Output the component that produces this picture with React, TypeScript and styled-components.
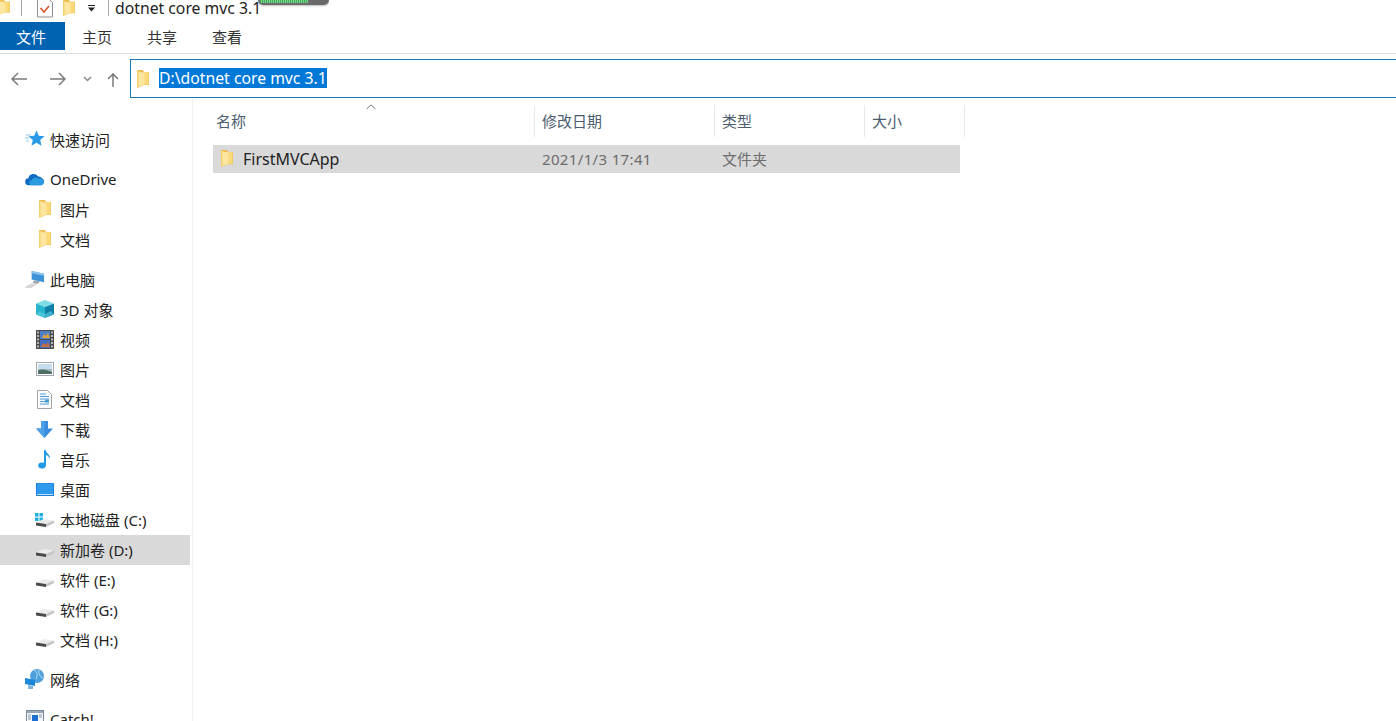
import React from 'react'
import styled, { createGlobalStyle } from 'styled-components'

const GlobalStyle = createGlobalStyle`
  html, body {
    margin: 0;
    padding: 0;
    background: #fff;
    overflow: hidden;
  }
  body {
    font-family: "Noto Sans", "Noto Sans CJK SC", sans-serif;
    color: #222;
  }
`

const Window = styled.div`
  display: flex;
  flex-direction: column;
  width: 1396px;
  height: 721px;
  overflow: hidden;
  position: relative;
`

const TitleBar = styled.div`
  display: flex;
  align-items: flex-start;
  height: 22px;
  flex: none;
`

const TitleSep = styled.span<{ $left: number }>`
  width: 1px;
  height: 16px;
  background: #a8a8a8;
  flex: none;
  margin-left: ${p => p.$left}px;
`

const TitleSlot = styled.span<{ $left: number }>`
  display: block;
  flex: none;
  line-height: 0;
  margin-left: ${p => p.$left}px;
`

const TitleText = styled.span`
  font-size: 15.75px;
  line-height: 17px;
  margin-left: 6px;
  color: #222;
  white-space: nowrap;
`

const Meter = styled.div`
  position: absolute;
  left: 258px;
  top: 0;
  width: 71px;
  height: 5px;
  background: #6a6a6a;
  border-radius: 0 0 5px 5px;
  box-shadow: 0 1px 2px rgba(0, 0, 0, 0.25);
`

const MeterFill = styled.div`
  width: 48px;
  height: 3px;
  margin-left: 2px;
  background: repeating-linear-gradient(90deg, #3fae5c 0 1px, #7ecf8e 1px 2px);
`

const Ribbon = styled.div`
  display: flex;
  height: 32px;
  flex: none;
  box-sizing: border-box;
  border-bottom: 1px solid #d9dde2;
`

const RibbonTab = styled.div<{ $active?: boolean }>`
  display: flex;
  align-items: center;
  justify-content: center;
  box-sizing: border-box;
  width: 65px;
  height: 28px;
  padding-right: ${p => (p.$active ? '3px' : '1px')};
  font-size: 15px;
  color: ${p => (p.$active ? '#fff' : '#333')};
  background: ${p => (p.$active ? '#0063b1' : 'transparent')};
`

const AddressRow = styled.div`
  display: flex;
  height: 44px;
  flex: none;
  padding-top: 5px;
  box-sizing: border-box;
`

const NavIcons = styled.div`
  display: flex;
  align-items: center;
  width: 130px;
  flex: none;
  padding-left: 11px;
  box-sizing: border-box;
`

const NavIcon = styled.svg<{ $left?: number; $top?: number }>`
  flex: none;
  margin-left: ${p => p.$left ?? 0}px;
  margin-top: ${p => p.$top ?? 1}px;
`

const AddressBox = styled.div`
  display: flex;
  align-items: center;
  flex: 1;
  height: 39px;
  box-sizing: border-box;
  border: 1px solid #1979b5;
  border-right: none;
  padding-left: 6px;
`

const AddressText = styled.span`
  display: block;
  margin: 0 0 2px 10px;
  font-size: 15.75px;
  line-height: 20px;
  background: #0078d7;
  color: #fff;
  white-space: nowrap;
`

const Body = styled.div`
  display: flex;
  flex: 1;
  min-height: 0;
`

const Sidebar = styled.nav`
  width: 193px;
  flex: none;
  box-sizing: border-box;
  padding-top: 27px;
  border-right: 1px solid #f0f0f0;
  display: flex;
  flex-direction: column;
`

const NavRow = styled.div<{ $level: number; $selected?: boolean; $gap?: boolean }>`
  display: flex;
  align-items: center;
  flex: none;
  height: 30px;
  width: 190px;
  margin-top: ${p => (p.$gap ? '10px' : 0)};
  padding: 0 0 2px ${p => (p.$level === 1 ? '25px' : '35px')};
  box-sizing: border-box;
  background: ${p => (p.$selected ? '#d9d9d9' : 'transparent')};
  font-size: 15px;
  color: #222;
  white-space: nowrap;
`

const NavIconSlot = styled.span<{ $level: number }>`
  display: flex;
  align-items: center;
  justify-content: center;
  width: ${p => (p.$level === 1 ? '20px' : '19px')};
  height: 20px;
  margin-right: ${p => (p.$level === 1 ? '5px' : '6px')};
  flex: none;
`

const Content = styled.main`
  flex: 1;
  padding: 7px 0 0 20px;
`

const ColumnHeader = styled.div`
  display: flex;
  height: 32px;
  position: relative;
`

const HeaderCell = styled.div<{ $width: number; $first?: boolean }>`
  display: flex;
  align-items: center;
  box-sizing: border-box;
  width: ${p => p.$width}px;
  height: 32px;
  padding: 0 0 2px ${p => (p.$first ? '3px' : '7px')};
  border-right: 1px solid #e6e8ea;
  font-size: 15px;
  color: #4c5d70;
`

const SortArrow = styled.svg`
  position: absolute;
  left: 153px;
  top: -1px;
`

const FileRow = styled.div`
  display: flex;
  align-items: center;
  width: 747px;
  height: 28px;
  margin-top: 8px;
  box-sizing: border-box;
  padding-bottom: 1px;
  background: #d9d9d9;
  font-size: 16px;
`

const FileName = styled.div`
  display: flex;
  align-items: center;
  width: 321px;
  box-sizing: border-box;
  padding-left: 8px;
  color: #222;
`

const FileLabel = styled.span`
  margin-left: 10px;
`

const FileCell = styled.div<{ $width: number; $numeric?: boolean }>`
  width: ${p => p.$width}px;
  box-sizing: border-box;
  padding-left: 8px;
  color: #6d6d6d;
  font-size: 15px;
  letter-spacing: ${p => (p.$numeric ? '0.35px' : 0)};
`

const Folder = ({ width = 12, height = 18 }: { width?: number; height?: number }) => (
  <svg width={width} height={height} viewBox="0 0 12 18" preserveAspectRatio="none">
    <path d="M0 0h6l1 2h5v13H7l-7 3z" fill="#eebd50" />
    <path d="M6 2h5.500v12.500H6z" fill="#fbd978" />
    <path d="M0 1l7.500 2v11.500L0 17.500z" fill="#fde6a0" />
    <path d="M0 1l1.500.4v15.500L0 17.500z" fill="#f6cf6e" />
  </svg>
)

const Star = () => (
  <svg width="20" height="18" viewBox="0 0 20 18">
    <path d="M11.500 0.500l2.300 5.300 5.700.5-4.300 3.800 1.300 5.600-5-3-5 3 1.300-5.600-4.300-3.800 5.700-.5z" fill="#2a9ae8" />
    <path d="M1 5h5M0 8h4M1 11h3" stroke="#8cc8f0" strokeWidth="1" />
  </svg>
)

const Cloud = () => (
  <svg width="21" height="14" viewBox="0 0 21 14">
    <path d="M4 13.500a3.600 3.600 0 0 1-.4-7.200 5.600 5.600 0 0 1 10.300-1.800 4.600 4.600 0 0 1 3.600 1.400 4 4 0 0 1-.5 7.600z" fill="#0f6cc0" />
    <path d="M7 13.500a2.600 2.600 0 0 1 0-5.200c1-2.600 5-4 7.500-1.600a3.600 3.600 0 0 1 3 .3c3 1 3.600 6.500-1 6.500z" fill="#2b9ae0" />
  </svg>
)

const Computer = () => (
  <svg width="21" height="19" viewBox="0 0 21 19">
    <path d="M0 17l7-3.500h7L7 18.500H1z" fill="#d8d8d8" />
    <path d="M7 0.500l13 3v9l-13-3z" fill="#3f94d8" />
    <path d="M7 0.500l13 3v2L7 3z" fill="#8cc4ef" />
    <path d="M10 10l6 1.800-3 2.200-5-1z" fill="#9aa5ae" />
  </svg>
)

const Cube = () => (
  <svg width="18" height="18" viewBox="0 0 18 18">
    <path d="M9 0l9 3.500-9 3.500-9-3.500z" fill="#7fdde8" />
    <path d="M0 3.500l9 3.500v11l-9-3.500z" fill="#25b4cc" />
    <path d="M18 3.500L9 7v11l9-3.500z" fill="#107fa8" />
    <path d="M3 11l6 3 6-3 3 3.500-9 3.500-9-3.500z" fill="#5fcfe0" opacity="0.6" />
  </svg>
)

const Film = () => (
  <svg width="18" height="19" viewBox="0 0 18 19">
    <rect width="18" height="19" fill="#4a4a4a" />
    <path d="M1 1.500h2v2H1zM1 5h2v2H1zM1 8.500h2v2H1zM1 12h2v2H1zM1 15.500h2v2H1zM15 1.500h2v2h-2zM15 5h2v2h-2zM15 8.500h2v2h-2zM15 12h2v2h-2zM15 15.500h2v2h-2z" fill="#b8b8b8" />
    <rect x="4" y="1" width="10" height="8" fill="#4d80c9" />
    <rect x="4" y="10" width="10" height="8" fill="#3f6fc4" />
    <path d="M6 8l2-4 2 2 2-3 2 5z" fill="#e0a43a" />
    <path d="M5 17l2-4 3 2 2-3 2 5z" fill="#c86a3a" />
  </svg>
)

const Picture = () => (
  <svg width="18" height="14" viewBox="0 0 18 14">
    <rect x="0.500" y="0.500" width="17" height="13" fill="#fff" stroke="#a4a8ac" />
    <rect x="2" y="2" width="14" height="5" fill="#c4dcee" />
    <rect x="2" y="7" width="14" height="5" fill="#a8bcc0" />
    <path d="M2 8.500c4-2 8-1 14 1.500v2H2z" fill="#4f6f65" />
  </svg>
)

const DocIcon = () => (
  <svg width="15" height="19" viewBox="0 0 15 19">
    <path d="M0.500 0.500h10l4 4v14H0.500z" fill="#fbfbfb" stroke="#a0a6ac" />
    <path d="M3 4h6M3 6.500h9M3 9h9M3 11.500h9M3 14h9" stroke="#4a9ad6" strokeWidth="1" />
    <path d="M8 9.500h4v3H8z" fill="#4a9ad6" />
  </svg>
)

const Download = () => (
  <svg width="17" height="17" viewBox="0 0 17 17">
    <path d="M5 0h7v7.500h5L8.500 17 0 7.500h5z" fill="#3a8ddc" />
    <path d="M5 0h3.500v17L0 7.500h5z" fill="#4da0e6" />
  </svg>
)

const Note = () => (
  <svg width="13" height="19" viewBox="0 0 13 19">
    <ellipse cx="4" cy="15.500" rx="3.800" ry="3" fill="#1f9ae6" />
    <path d="M6 15V0h1.500c.5 3 5 4.500 4.500 9-1-2.500-2.500-3.500-4-4v10.500z" fill="#1f9ae6" />
  </svg>
)

const Desktop = () => (
  <svg width="18" height="13" viewBox="0 0 18 13">
    <rect width="18" height="13" fill="#1c7ed6" />
    <rect x="1" y="0.500" width="16" height="10.500" fill="#2f9bef" />
    <path d="M1 11h16v1H1z" fill="#bfe2fa" />
  </svg>
)

const Drive = ({ windows }: { windows?: boolean }) => (
  <svg width="19" height="19" viewBox="0 0 19 19">
    {windows && (
      <g fill="#1fb0e0">
        <rect x="0" y="3" width="3.500" height="3.500" />
        <rect x="4.500" y="3" width="3.500" height="3.500" />
        <rect x="0" y="7.500" width="3.500" height="3.500" />
        <rect x="4.500" y="7.500" width="3.500" height="3.500" />
      </g>
    )}
    <path d="M1 12.500l8-3.500 10 1.500-7 3.500z" fill="#ececec" />
    <path d="M1 12.500l10 1.500v3L1 15.500z" fill="#4a4a4a" />
    <path d="M11 14l8-3.500v2.500L11 17z" fill="#c4c4c4" />
  </svg>
)

const Network = () => (
  <svg width="20" height="20" viewBox="0 0 20 20">
    <circle cx="12" cy="7" r="7" fill="#4da0dc" />
    <path d="M9 1c3 1 4 5 2 9M14 1c-1 3 1 7 4 8" stroke="#bfe0f4" fill="none" />
    <path d="M0 9l10 2v6l-10-2z" fill="#1c86d8" />
    <path d="M3 16l5 1v3H3z" fill="#7fb4dc" />
  </svg>
)

const Catch = () => (
  <svg width="18" height="18" viewBox="0 0 18 18">
    <rect x="0.500" y="0.500" width="17" height="17" fill="#f4f6f8" stroke="#7a8a9a" />
    <rect x="1" y="1" width="16" height="2" fill="#98a8b8" />
    <rect x="6" y="5" width="6" height="6" fill="#1c6fd0" />
    <path d="M2 5h3M2 7h3M2 9h3M13 5h3M13 7h3" stroke="#8a98a8" />
  </svg>
)

const TaskDoc = () => (
  <svg width="16" height="18" viewBox="0 0 16 18">
    <path d="M0.500 -2h10.500l4.500 4.500v14.500H0.500z" fill="#fcfcfc" stroke="#8f8f8f" />
    <path d="M3.500 8l3.500 4 5-6" stroke="#d9572b" strokeWidth="1.600" fill="none" />
  </svg>
)

const navRows = [
  { label: '快速访问', level: 1, icon: <Star />, gap: false },
  { label: 'OneDrive', level: 1, icon: <Cloud />, gap: true },
  { label: '图片', level: 2, icon: <Folder /> },
  { label: '文档', level: 2, icon: <Folder /> },
  { label: '此电脑', level: 1, icon: <Computer />, gap: true },
  { label: '3D 对象', level: 2, icon: <Cube /> },
  { label: '视频', level: 2, icon: <Film /> },
  { label: '图片', level: 2, icon: <Picture /> },
  { label: '文档', level: 2, icon: <DocIcon /> },
  { label: '下载', level: 2, icon: <Download /> },
  { label: '音乐', level: 2, icon: <Note /> },
  { label: '桌面', level: 2, icon: <Desktop /> },
  { label: '本地磁盘 (C:)', level: 2, icon: <Drive windows /> },
  { label: '新加卷 (D:)', level: 2, icon: <Drive />, selected: true },
  { label: '软件 (E:)', level: 2, icon: <Drive /> },
  { label: '软件 (G:)', level: 2, icon: <Drive /> },
  { label: '文档 (H:)', level: 2, icon: <Drive /> },
  { label: '网络', level: 1, icon: <Network />, gap: true },
  { label: 'Catch!', level: 1, icon: <Catch />, gap: true }
]

export default function App() {
  return (
    <Window>
      <GlobalStyle />
      <TitleBar>
        <TitleSlot $left={-2}>
          <Folder width={12} height={15} />
        </TitleSlot>
        <TitleSep $left={11} />
        <TitleSlot $left={15}>
          <TaskDoc />
        </TitleSlot>
        <TitleSlot $left={10}>
          <Folder width={12} height={16} />
        </TitleSlot>
        <TitleSlot $left={12}>
          <svg width="9" height="13" viewBox="0 0 9 13">
            <path d="M1 5.500h7M1 7.500h7l-3.500 4z" stroke="none" fill="#222" />
            <path d="M1 5.500h7" stroke="#222" />
          </svg>
        </TitleSlot>
        <TitleSep $left={12} />
        <TitleText>dotnet core mvc 3.1</TitleText>
      </TitleBar>
      <Meter>
        <MeterFill />
      </Meter>
      <Ribbon>
        <RibbonTab $active>文件</RibbonTab>
        <RibbonTab>主页</RibbonTab>
        <RibbonTab>共享</RibbonTab>
        <RibbonTab>查看</RibbonTab>
      </Ribbon>
      <AddressRow>
        <NavIcons>
          <NavIcon width="16" height="14" viewBox="0 0 16 14" fill="none" stroke="#7b7b7b" strokeWidth="1.500">
            <path d="M16 7H1M7 1L1 7l6 6" />
          </NavIcon>
          <NavIcon $left={23} width="16" height="14" viewBox="0 0 16 14" fill="none" stroke="#7b7b7b" strokeWidth="1.500">
            <path d="M0 7h15M9 1l6 6-6 6" />
          </NavIcon>
          <NavIcon $left={17} width="9" height="6" viewBox="0 0 9 6" fill="none" stroke="#8a8a8a" strokeWidth="1.500">
            <path d="M1 1l3.500 3.500L8 1" />
          </NavIcon>
          <NavIcon $left={15} $top={3} width="12" height="14" viewBox="0 0 12 14" fill="none" stroke="#7b7b7b" strokeWidth="1.500">
            <path d="M6 14V1M1 6l5-5 5 5" />
          </NavIcon>
        </NavIcons>
        <AddressBox>
          <Folder width={12} height={18} />
          <AddressText>D:\dotnet core mvc 3.1</AddressText>
        </AddressBox>
      </AddressRow>
      <Body>
        <Sidebar>
          {navRows.map((row, i) => (
            <NavRow key={i} $level={row.level} $selected={row.selected} $gap={row.gap}>
              <NavIconSlot $level={row.level}>{row.icon}</NavIconSlot>
              {row.label}
            </NavRow>
          ))}
        </Sidebar>
        <Content>
          <ColumnHeader>
            <SortArrow width="10" height="6" viewBox="0 0 10 6" fill="none" stroke="#7b7b7b">
              <path d="M0.500 5L5 1l4.500 4" />
            </SortArrow>
            <HeaderCell $width={322} $first>名称</HeaderCell>
            <HeaderCell $width={180}>修改日期</HeaderCell>
            <HeaderCell $width={150}>类型</HeaderCell>
            <HeaderCell $width={100}>大小</HeaderCell>
          </ColumnHeader>
          <FileRow>
            <FileName>
              <Folder width={12} height={17} />
              <FileLabel>FirstMVCApp</FileLabel>
            </FileName>
            <FileCell $width={180} $numeric>2021/1/3 17:41</FileCell>
            <FileCell $width={150}>文件夹</FileCell>
          </FileRow>
        </Content>
      </Body>
    </Window>
  )
}
